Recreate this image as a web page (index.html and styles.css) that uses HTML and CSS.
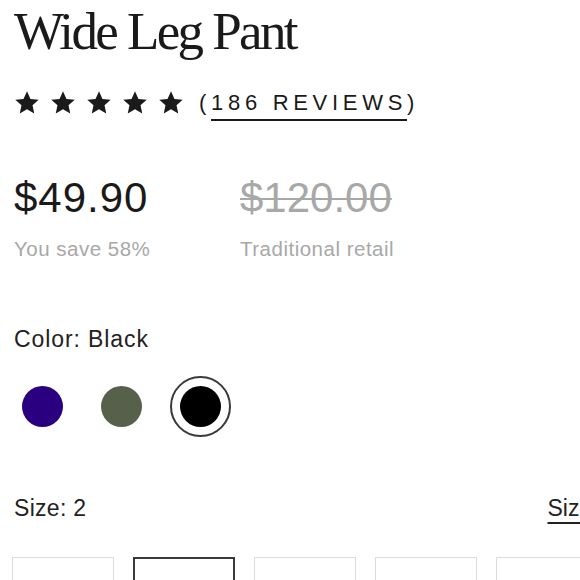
FILE: index.html
```html
<!DOCTYPE html>
<html lang="en">
<head>
<meta charset="utf-8">
<title>Wide Leg Pant</title>
<link rel="stylesheet" href="styles.css">
</head>
<body>
<main class="panel">
  <h1 class="title">Wide Leg Pant</h1>

  <div class="rating">
    <div class="stars" aria-label="5 out of 5 stars">
      <svg class="star" viewBox="0 0 24 24"><path d="M12 1.2l3.2 7 7.6.8-5.7 5.1 1.6 7.5L12 17.8l-6.7 3.8 1.6-7.5L1.2 9l7.6-.8z"/></svg>
      <svg class="star" viewBox="0 0 24 24"><path d="M12 1.2l3.2 7 7.6.8-5.7 5.1 1.6 7.5L12 17.8l-6.7 3.8 1.6-7.5L1.2 9l7.6-.8z"/></svg>
      <svg class="star" viewBox="0 0 24 24"><path d="M12 1.2l3.2 7 7.6.8-5.7 5.1 1.6 7.5L12 17.8l-6.7 3.8 1.6-7.5L1.2 9l7.6-.8z"/></svg>
      <svg class="star" viewBox="0 0 24 24"><path d="M12 1.2l3.2 7 7.6.8-5.7 5.1 1.6 7.5L12 17.8l-6.7 3.8 1.6-7.5L1.2 9l7.6-.8z"/></svg>
      <svg class="star" viewBox="0 0 24 24"><path d="M12 1.2l3.2 7 7.6.8-5.7 5.1 1.6 7.5L12 17.8l-6.7 3.8 1.6-7.5L1.2 9l7.6-.8z"/></svg>
    </div>
    <span class="reviews">(<a class="reviews-link" href="#">186 REVIEWS</a>)</span>
  </div>

  <div class="prices">
    <div class="price-col">
      <div class="price price-now">$49.90</div>
      <div class="price-note">You save 58%</div>
    </div>
    <div class="price-col">
      <div class="price price-old">$120.00</div>
      <div class="price-note">Traditional retail</div>
    </div>
  </div>

  <div class="label color-label">Color: Black</div>
  <div class="swatches">
    <button class="swatch"><span class="dot dot-purple"></span></button>
    <button class="swatch"><span class="dot dot-green"></span></button>
    <button class="swatch swatch-selected"><span class="dot dot-black"></span></button>
  </div>

  <div class="size-head">
    <div class="label">Size: 2</div>
    <a class="size-guide" href="#">Size Guide</a>
  </div>
  <div class="sizes">
    <button class="size-box"></button>
    <button class="size-box size-selected"></button>
    <button class="size-box"></button>
    <button class="size-box"></button>
    <button class="size-box"></button>
    <button class="size-box"></button>
  </div>
</main>
</body>
</html>
```

FILE: styles.css
```css
html, body {
  margin: 0;
  padding: 0;
  background: #ffffff;
  overflow: hidden;
}

body {
  font-family: "Liberation Sans", Arial, sans-serif;
  color: #1a1a1a;
}

.panel {
  width: 646px;
  padding: 1px 0 0 14px;
}

.title {
  margin: 0;
  font-family: "Liberation Serif", "Times New Roman", serif;
  font-weight: 400;
  font-size: 53px;
  line-height: 60px;
  letter-spacing: -2.6px;
  color: #1a1a1a;
}

.rating {
  margin-top: 26px;
  height: 32px;
  display: flex;
  align-items: center;
  gap: 15px;
}

.stars {
  display: flex;
  gap: 10px;
}

.star {
  width: 26px;
  height: 26px;
  fill: #1a1a1a;
  display: block;
}

.reviews {
  font-size: 22px;
  line-height: 32px;
  letter-spacing: 4.7px;
  color: #1a1a1a;
}

.reviews-link {
  color: inherit;
  text-decoration: underline;
  text-decoration-thickness: 2px;
  text-underline-offset: 9px;
}

.prices {
  margin-top: 55px;
  display: grid;
  grid-template-columns: 226px auto;
}

.price {
  font-size: 42px;
  line-height: 48px;
  color: #1a1a1a;
}

.price-now {
  letter-spacing: 1px;
}

.price-old {
  color: #a8a8a8;
  text-decoration: line-through;
  text-decoration-thickness: 2px;
}

.price-note {
  margin-top: 15px;
  font-size: 20.5px;
  line-height: 24px;
  letter-spacing: 0.5px;
  color: #a8a8a8;
}

.label {
  font-size: 23px;
  line-height: 28px;
  letter-spacing: 0.3px;
  color: #222222;
}

.color-label {
  margin-top: 64px;
  letter-spacing: 0.9px;
}

.swatches {
  margin: 23px 0 0 -2px;
  display: flex;
  gap: 18px;
}

.swatch {
  width: 61px;
  height: 61px;
  padding: 0;
  border: 2px solid transparent;
  border-radius: 50%;
  background: transparent;
  display: flex;
  align-items: center;
  justify-content: center;
}

.swatch-selected {
  border-color: #3a3a3a;
}

.dot {
  width: 41px;
  height: 41px;
  border-radius: 50%;
  display: block;
}

.dot-purple { background: #2a0080; }
.dot-green { background: #56604a; }
.dot-black { background: #000000; }

.size-head {
  margin-top: 57px;
  display: flex;
  justify-content: space-between;
  align-items: baseline;
}

.size-guide {
  font-size: 23px;
  line-height: 28px;
  color: #222222;
  text-decoration: underline;
  text-decoration-thickness: 1.5px;
  text-underline-offset: 6px;
}

.sizes {
  margin: 35px 0 0 -2px;
  display: flex;
  gap: 19px;
}

.size-box {
  flex: none;
  width: 102px;
  height: 64px;
  padding: 0;
  background: #ffffff;
  border: 1.5px solid #dcdcdc;
}

.size-selected {
  border: 2px solid #3a3a3a;
}
```
